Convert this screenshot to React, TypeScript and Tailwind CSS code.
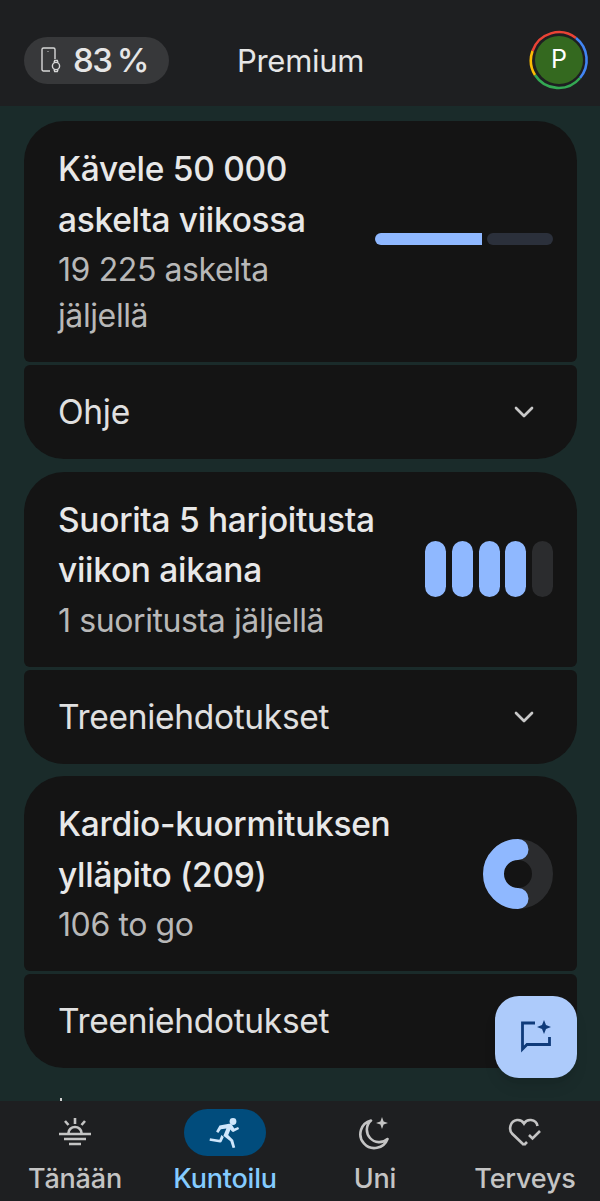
import { ChevronDown } from 'lucide-react';
import type { ReactNode } from 'react';

const font = 'font-["Inter",sans-serif]';

function WatchPhoneIcon() {
  return (
    <svg width="24" height="28" viewBox="0 0 24 28" fill="none" stroke="#d8d8d8" strokeWidth="1.4">
      <path d="M11 25H4.500a1.500 1.500 0 0 1-1.500-1.500v-20A1.500 1.500 0 0 1 4.500 2h10A1.500 1.500 0 0 1 16 3.500V13" />
      <circle cx="9" cy="5.500" r="0.6" fill="#d8d8d8" stroke="none" />
      <circle cx="17" cy="20" r="3.600" />
      <path d="M15 16.500l.7-2h2.600l.7 2M15 23.500l.7 2h2.600l.7-2" />
    </svg>
  );
}

function Avatar() {
  return (
    <div className="relative flex h-[60px] w-[60px] items-center justify-center">
      <svg className="absolute inset-0" width="60" height="60" viewBox="0 0 60 60" fill="none" strokeWidth="2.6">
        <path d="M3.500 21A28 28 0 0 1 47 8" stroke="#ea4335" />
        <path d="M47 8A28 28 0 0 1 51 48" stroke="#4285f4" />
        <path d="M51 48A28 28 0 0 1 6 45" stroke="#34a853" />
        <path d="M6 45A28 28 0 0 1 3.500 21" stroke="#fbbc04" />
      </svg>
      <div className="flex h-12 w-12 items-center justify-center rounded-full bg-[#34691f] text-[25px] text-white">P</div>
    </div>
  );
}

function Header() {
  return (
    <header className="flex h-[106px] shrink-0 items-center bg-[#1e1f21] pl-6 pr-[11px] pt-[14px]">
      <div className="flex h-[47px] w-[145px] items-center gap-[10px] rounded-full bg-[#37383a] pl-[15px]">
        <WatchPhoneIcon />
        <span className="text-[33px] font-medium leading-none tracking-[-1.5px] text-[#e6e6e6] [word-spacing:-2px]">83 %</span>
      </div>
      <span className="ml-[68px] text-[31px] leading-none tracking-[-0.3px] text-[#e6e6e6]">Premium</span>
      <div className="ml-auto">
        <Avatar />
      </div>
    </header>
  );
}

function GoalCard({
  title,
  sub,
  footer,
  chart,
  h,
  chevron = true,
}: {
  title: string[];
  sub: string[];
  footer: string;
  chart: ReactNode;
  h: string;
  chevron?: boolean;
}) {
  return (
    <section className="flex flex-col gap-[3px]">
      <div className={`flex items-center justify-between rounded-t-[40px] rounded-b-[6px] bg-[#141414] pl-[34px] pr-6 ${h}`}>
        <div>
          {title.map((line) => (
            <div key={line} className="text-[33.5px] font-medium leading-[50.5px] tracking-[-0.3px] text-[#e8e8e8]">
              {line}
            </div>
          ))}
          <div className="mt-[2px]">
            {sub.map((line) => (
              <div key={line} className="text-[32px] leading-[46px] tracking-[-0.4px] text-[#b8b8b8]">
                {line}
              </div>
            ))}
          </div>
        </div>
        {chart}
      </div>
      <div className="flex h-[94px] items-center justify-between rounded-t-[6px] rounded-b-[40px] bg-[#141414] pl-[34px] pr-[37px]">
        <span className="text-[33.5px] tracking-[-0.3px] text-[#e0e0e0]">{footer}</span>
        {chevron && <ChevronDown size={32} strokeWidth={2} color="#c8c8c8" />}
      </div>
    </section>
  );
}

function StepsBar() {
  return (
    <div className="mb-[6px] flex w-[178px] gap-[5px]">
      <div className="h-3 w-[107px] rounded-l-full rounded-r-[3px] bg-[#8fb8ff]" />
      <div className="h-3 flex-1 rounded-full bg-[#2b303b]" />
    </div>
  );
}

function WorkoutBars() {
  const bars = [true, true, true, true, false];
  return (
    <div className="flex gap-[5.75px]">
      {bars.map((done, i) => (
        <div key={i} className={`h-[56px] w-[21px] rounded-full ${done ? 'bg-[#8fb8ff]' : 'bg-[#2b2c2e]'}`} />
      ))}
    </div>
  );
}

function CardioRing() {
  return (
    <svg width="70" height="70" viewBox="0 0 70 70" fill="none" strokeWidth="21">
      <circle cx="35" cy="35" r="24.500" stroke="#2b2c2e" />
      <path d="M35 10.500A24.500 24.500 0 0 0 35 59.500" stroke="#8fb8ff" strokeLinecap="round" />
    </svg>
  );
}

function SunIcon() {
  return (
    <svg width="34" height="34" viewBox="0 0 34 34" fill="none" stroke="#c4c4c4" strokeWidth="2.600">
      <path d="M17 2v6M7 5l3.500 4M27 5l-3.500 4" />
      <path d="M10.500 17a6.500 6 0 0 1 13 0" />
      <path d="M1 18h32M6 23h22M11 28h12" />
    </svg>
  );
}

function RunIcon() {
  return (
    <svg width="32" height="32" viewBox="0 0 32 32" fill="#cfe6fb">
      <circle cx="24" cy="4.500" r="3.400" />
      <path d="M10.500 8.500l9.500-1.700c1.400-.2 2.700.4 3.400 1.600l1.900 3.200 3.800-1.700 1 2.200-5.400 2.600c-.8.4-1.700.1-2.200-.6l-1-1.500-2.300 5.400 5 5 2 7.400-2.600.7-2.200-6.800-7-5.600 3-7.300-5.500.9-2.600 3.800-2.200-1.500z" />
      <path d="M12.400 18l2.400 2-2.100 4.500c-.3.700-1 1-1.700.9L.5 23.800l.5-2.500 9.400 1.400z" />
    </svg>
  );
}

function MoonIcon() {
  return (
    <svg width="34" height="36" viewBox="0 0 34 36" fill="none">
      <path d="M13 5.500A14 14 0 1 0 29.500 24 12 12 0 0 1 13 5.500z" stroke="#c4c4c4" strokeWidth="2.600" strokeLinejoin="round" />
      <path d="M24 2l1.600 4.400L30 8l-4.400 1.600L24 14l-1.600-4.400L18 8l4.400-1.600z" fill="#c4c4c4" />
    </svg>
  );
}

function HeartCheckIcon() {
  return (
    <svg width="34" height="32" viewBox="0 0 34 32" fill="none" stroke="#c4c4c4" strokeWidth="2.600">
      <path d="M16 28L4 16.500C.5 12.500 2 4 9 3c3-.3 5.500 1 7 3.500C17.500 4 20 2.700 23 3c3.500.4 6 2.700 6.500 6" />
      <path d="M16 28l3-3" />
      <path d="M21 18l3.500 3.500L32 14" />
    </svg>
  );
}

function FabIcon() {
  return (
    <svg width="34" height="34" viewBox="0 0 34 34" fill="none">
      <path d="M16 3H3.500v26L8 24.500h22.500V17" stroke="#0f3b7a" strokeWidth="2.800" />
      <path d="M25 0l2 5 5 2-5 2-2 5-2-5-5-2 5-2z" fill="#0f3b7a" />
    </svg>
  );
}

function NavItem({ label, icon, active = false }: { label: string; icon: ReactNode; active?: boolean }) {
  return (
    <div className="flex w-[150px] flex-col items-center">
      <div className={`flex h-[47px] w-[82px] items-center justify-center rounded-full ${active ? 'bg-[#014c7c]' : ''}`}>{icon}</div>
      <span className={`mt-[8px] text-[27px] font-medium leading-[30px] tracking-[-0.2px] ${active ? 'text-[#84cbff]' : 'text-[#c4c4c4]'}`}>{label}</span>
    </div>
  );
}

export default function App() {
  return (
    <div className={`relative flex h-[1201px] w-[600px] flex-col overflow-hidden bg-[#1a2b2a] ${font}`}>
      <Header />
      <main className="flex flex-1 flex-col gap-[12.5px] overflow-hidden pl-6 pr-[23px] pt-[14.75px]">
        <GoalCard
          h="h-[241.5px]"
          title={['Kävele 50 000', 'askelta viikossa']}
          sub={['19 225 askelta', 'jäljellä']}
          footer="Ohje"
          chart={<StepsBar />}
        />
        <GoalCard
          h="h-[195px]"
          title={['Suorita 5 harjoitusta', 'viikon aikana']}
          sub={['1 suoritusta jäljellä']}
          footer="Treeniehdotukset"
          chart={<WorkoutBars />}
        />
        <GoalCard
          h="h-[195px]"
          title={['Kardio-kuormituksen', 'ylläpito (209)']}
          sub={['106 to go']}
          footer="Treeniehdotukset"
          chart={<CardioRing />}
          chevron={false}
        />
      </main>
      <div className="absolute left-[60px] top-[1098px] h-[3px] w-[2px] bg-[#d0d0d0]" />
      <button className="absolute left-[495px] top-[996px] flex h-[82px] w-[82px] items-center justify-center rounded-[24px] bg-[#adcbfb] shadow-lg">
        <FabIcon />
      </button>
      <nav className="flex h-[100px] shrink-0 bg-[#1e1f21] pt-2">
        <NavItem label="Tänään" icon={<SunIcon />} />
        <NavItem label="Kuntoilu" icon={<RunIcon />} active />
        <NavItem label="Uni" icon={<MoonIcon />} />
        <NavItem label="Terveys" icon={<HeartCheckIcon />} />
      </nav>
    </div>
  );
}
